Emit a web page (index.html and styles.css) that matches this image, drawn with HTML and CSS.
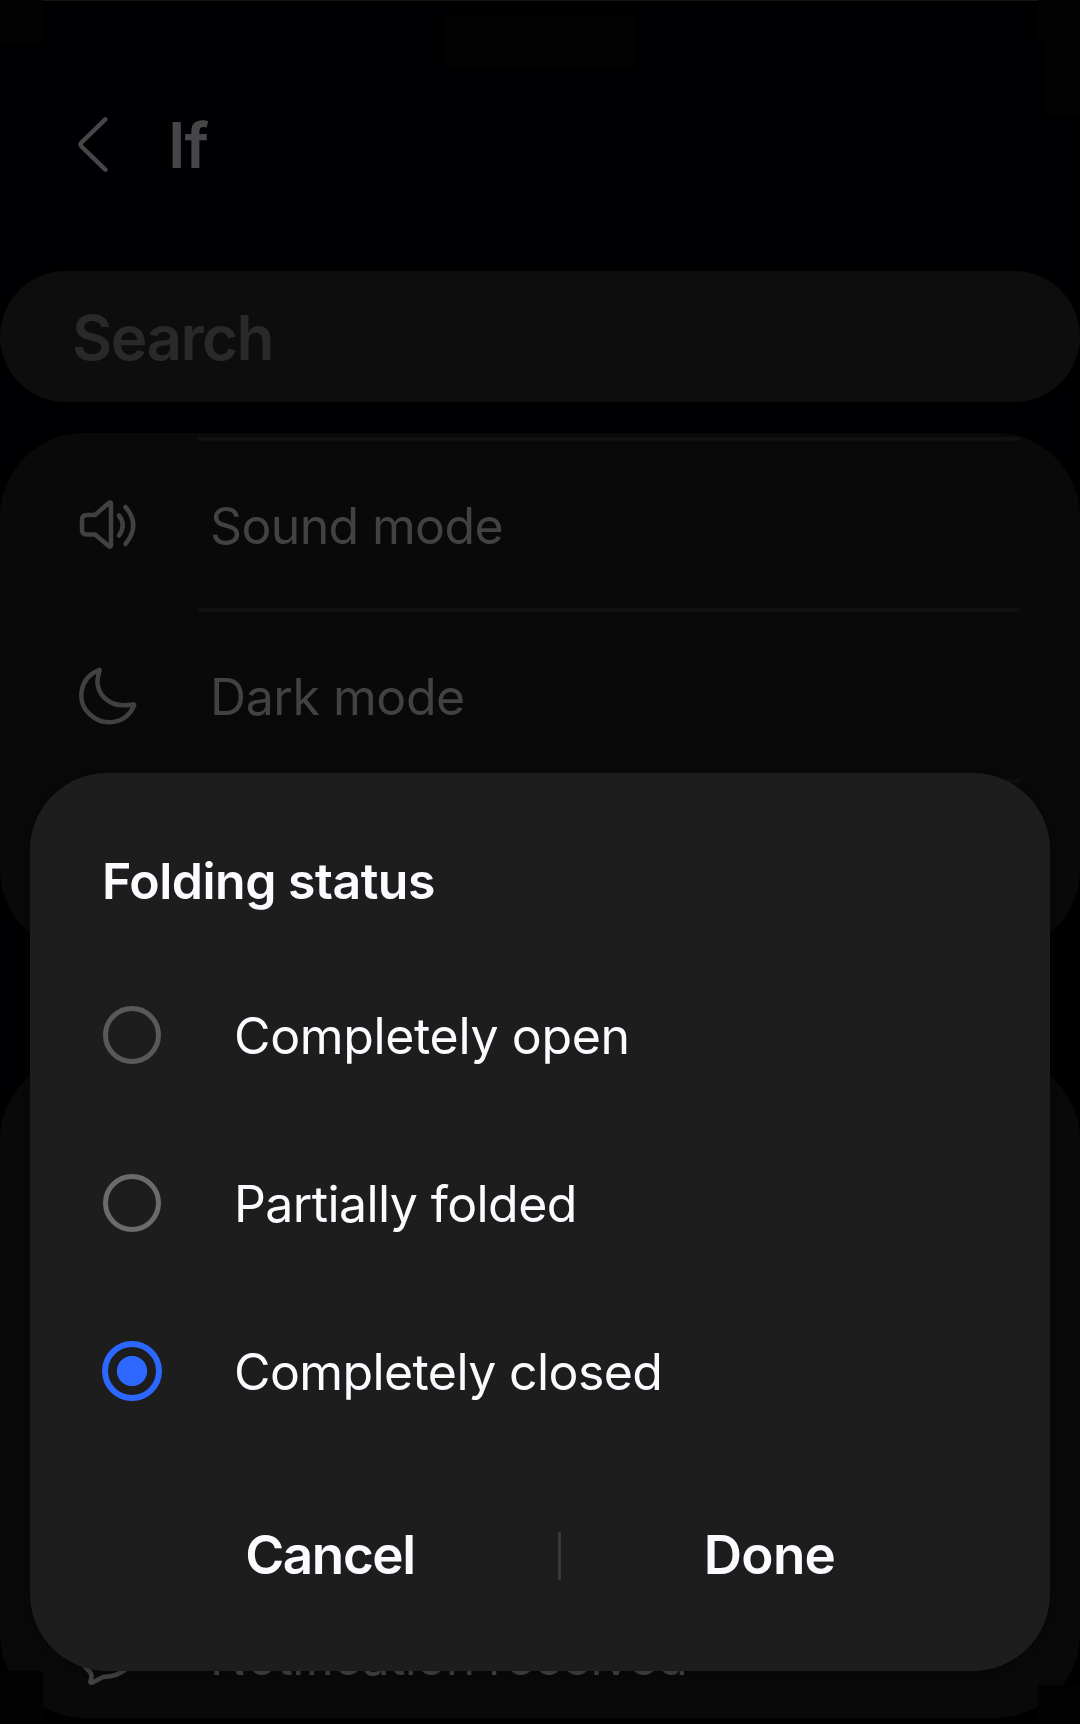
FILE: index.html
```html
<!DOCTYPE html>
<html lang="en">
<head>
<meta charset="utf-8">
<title>If</title>
<link rel="stylesheet" href="styles.css">
</head>
<body>
<main class="screen">
  <header class="topbar">
    <svg class="back" viewBox="0 0 32 60" fill="none"><path d="M28.300 4.300 4.500 27.500Q2.700 29.500 4.500 31.500L28.300 54.700"/></svg>
    <h1 class="title">If</h1>
  </header>
  <div class="search"><span class="search-text">Search</span></div>
  <section class="card card-first">
    <div class="row">
      <svg class="icon" viewBox="0 0 60 60" fill="none"><path d="M8 19H16L30 6.800Q32 5.700 32 8V49Q32 51.300 30 50.200L16 38.500H8Q3 38.500 3 33.500V24Q3 19 8 19ZM40 19.500Q47.500 29 40 39.500M46.500 11Q62 29 46.500 48"/></svg>
      <span class="label sound">Sound mode</span>
    </div>
    <div class="row">
      <svg class="icon" viewBox="0 0 60 60" fill="none"><path d="M20 3C0 11 -3 35 11 47.500C26 61 48 56 55 38.500Q55.500 37 53.500 37.500C29 42 13 25 20.500 4Q21 2.500 20 3Z"/></svg>
      <span class="label dark">Dark mode</span>
    </div>
    <div class="row"></div>
  </section>
  <section class="card card-second">
    <div class="row">
      <svg class="icon" viewBox="0 0 60 60" fill="none"><path d="M8 42C-8 27 4 4 28 4C62 4 66 48 24 50L13.500 55.500Q11 56.500 11.500 54L12.500 50Q13 46 8 42Z"/></svg>
      <span class="label notification">Notification received</span>
    </div>
  </section>
</main>
<section class="dialog">
  <h2 class="dialog-title">Folding status</h2>
  <div class="option"><span class="radio dim"></span><span class="text open">Completely open</span></div>
  <div class="option"><span class="radio"></span><span class="text partial">Partially folded</span></div>
  <div class="option"><span class="radio checked"></span><span class="text closed">Completely closed</span></div>
  <div class="actions">
    <span class="action cancel">Cancel</span>
    <span class="separator"></span>
    <span class="action done">Done</span>
  </div>
</section>
</body>
</html>
```
FILE: styles.css
```css
* { box-sizing: border-box; }
body { margin: 0; width: 1080px; height: 1724px; overflow: hidden; position: relative; background: #000002; font-family: Inter, "Open Sans", sans-serif; }
h1, h2 { margin: 0; }
span, h1, h2 { white-space: nowrap; }
.screen { height: 1724px; display: flex; flex-direction: column; }
/* Display cutout and corner masks */
.screen::after {
  content: "";
  position: absolute;
  inset: 0;
  background:
    linear-gradient(#161617, #161617) 43px 0 / 995px 1px,
    linear-gradient(#020202, #020202) 0 0 / 43px 42px,
    linear-gradient(#020202, #020202) 446px 15px / 189px 51px,
    linear-gradient(#020202, #020202) 1038px 0 / 42px 42px,
    linear-gradient(#020202, #020202) 1044px 42px / 36px 74px,
    linear-gradient(#020202, #020202) 0 1671px / 43px 52px,
    linear-gradient(#020202, #020202) 1038px 1685px / 42px 38px;
  background-repeat: no-repeat;
}
.topbar { height: 271px; padding: 115px 0 0 77px; display: flex; align-items: flex-start; }
.back { width: 32px; height: 60px; stroke: #464648; stroke-width: 4.500; stroke-linecap: round; stroke-linejoin: round; }
.title { margin-left: 59px; font-size: 63px; line-height: 60px; font-weight: 600; letter-spacing: -1px; color: #464648; }
.search { height: 131px; border-radius: 66px; background: #0d0d0d; padding: 2px 0 0 72px; display: flex; align-items: center; }
.search-text { font-size: 62px; font-weight: 600; letter-spacing: -1.600px; color: #292929; }
.card { background: #090909; border-radius: 84px; overflow: hidden; flex: none; }
.card-first { margin-top: 31px; height: 520px; padding-top: 4px; }
.card-second { margin-top: 103px; height: 662px; padding-top: 512px; }
.row { height: 171px; padding: 6px 60px 0 79px; display: flex; align-items: center; background: linear-gradient(#101010, #101010) 198px 0 / 822px 4px no-repeat; }
.icon { width: 60px; height: 60px; stroke: #414141; stroke-width: 4.500; stroke-linecap: round; stroke-linejoin: round; flex: none; }
.label { margin-left: 71px; padding-top: 1px; font-size: 50px; color: #424244; }
.sound { letter-spacing: -0.650px; }
.dark { letter-spacing: -0.450px; }
.notification { letter-spacing: -0.600px; }
.dialog { position: absolute; z-index: 1; left: 30px; top: 772.500px; width: 1020px; height: 898px; border-radius: 77px; background: #1d1d1e; color: #fbfaff; padding: 71.500px 72px 71px; box-shadow: 0 1px 8px rgba(0, 0, 0, 0.300); }
.dialog-title { font-size: 50px; line-height: 74px; font-weight: 600; letter-spacing: -0.500px; }
.option { height: 168px; display: flex; align-items: center; padding-left: 1px; }
.dialog-title + .option { margin-top: 33px; }
.radio { width: 58px; height: 58px; border: 5px solid #6b6b6e; border-radius: 50%; flex: none; }
.dim { border-color: #59595b; }
.checked { width: 60px; height: 60px; margin: 0 -1px; border: 6px solid #2c68ff; background: radial-gradient(circle, #2c68ff 14.700px, transparent 15.500px); }
.text { margin-left: 73px; padding-top: 2px; font-size: 50px; }
.open { letter-spacing: -0.350px; }
.partial { letter-spacing: -0.600px; }
.closed { letter-spacing: -0.600px; }
.actions { margin-top: 65px; height: 72px; display: grid; grid-template-columns: 456px 3px 1fr; align-items: center; justify-items: center; }
.action { padding-bottom: 2px; font-size: 53px; font-weight: 600; }
.cancel { letter-spacing: -1.400px; }
.done { letter-spacing: -0.700px; }
.separator { width: 3px; height: 48px; background: #39393a; }
```
